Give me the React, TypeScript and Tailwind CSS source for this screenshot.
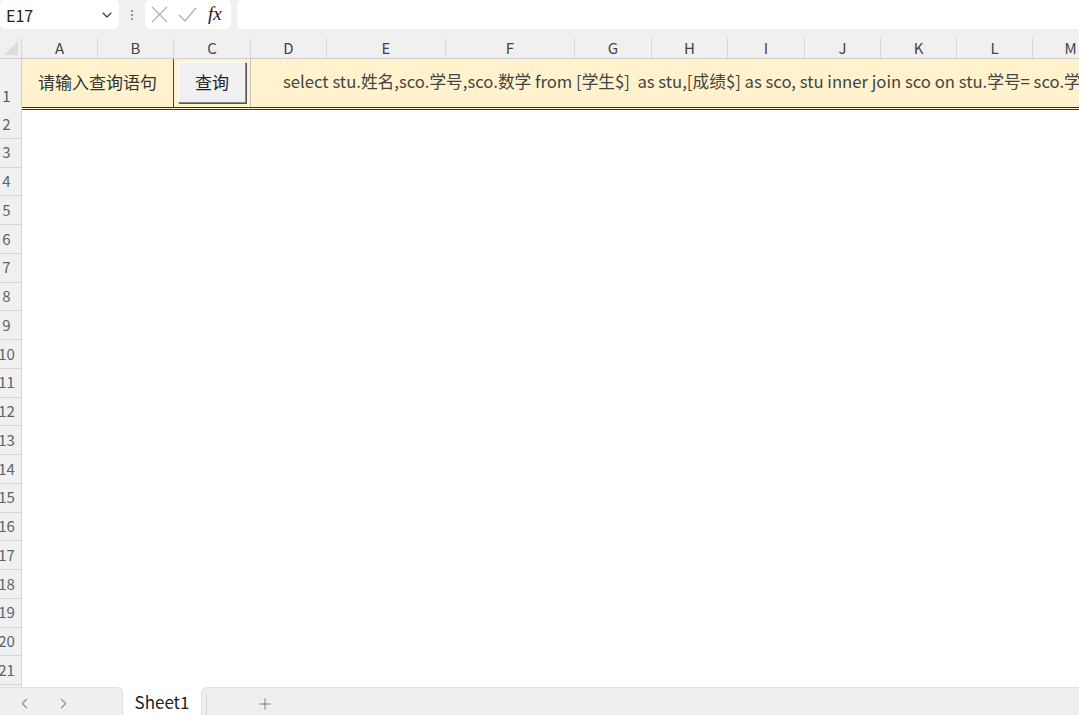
import React from 'react';
import { ChevronDown, ChevronLeft, ChevronRight, Plus } from 'lucide-react';

const COLUMNS: { label: string; width: number }[] = [
  { label: 'A', width: 76 },
  { label: 'B', width: 76 },
  { label: 'C', width: 77 },
  { label: 'D', width: 76 },
  { label: 'E', width: 119 },
  { label: 'F', width: 129 },
  { label: 'G', width: 77 },
  { label: 'H', width: 76 },
  { label: 'I', width: 77 },
  { label: 'J', width: 76 },
  { label: 'K', width: 76 },
  { label: 'L', width: 76 },
  { label: 'M', width: 76 },
];

const ROWS = Array.from({ length: 21 }, (_, i) => i + 2);

const FONT = { fontFamily: '"Noto Sans CJK SC", "Noto Sans", sans-serif' };

const QUERY =
  'select stu.姓名,sco.学号,sco.数学 from [学生$]  as stu,[成绩$] as sco, stu inner join sco on stu.学号= sco.学号';

const App: React.FC = () => {
  return (
    <div className="w-full h-[715px] flex flex-col overflow-hidden bg-white text-[#333]" style={FONT}>
      {/* Formula toolbar */}
      <div className="h-[38px] shrink-0 bg-[#f0f0f0] flex items-start gap-[6px]">
        <div className="w-[119px] h-[29px] bg-white rounded-[5px] flex items-center justify-between pl-[6px] pr-[4px]">
          <span className="text-[16px] text-[#222]">E17</span>
          <ChevronDown size={16} className="text-[#333]" strokeWidth={1.6} />
        </div>
        <div className="w-[14px] h-[29px] flex flex-col items-center justify-center gap-[2px]">
          <span className="w-[2px] h-[2px] bg-[#777] rounded-full"></span>
          <span className="w-[2px] h-[2px] bg-[#777] rounded-full"></span>
          <span className="w-[2px] h-[2px] bg-[#777] rounded-full"></span>
        </div>
        <div className="w-[86px] h-[29px] bg-white rounded-[5px] flex items-center pl-[6px] gap-[10px]">
          <svg width="17" height="17" viewBox="0 0 17 17" className="text-[#b0b0b0]">
            <path d="M1 1 L16 16 M16 1 L1 16" stroke="currentColor" strokeWidth="1.2" fill="none" />
          </svg>
          <svg width="19" height="17" viewBox="0 0 19 17" className="text-[#b0b0b0]">
            <path d="M1 9 L7 15 L18 2" stroke="currentColor" strokeWidth="1.2" fill="none" />
          </svg>
          <span className="italic text-[19px] text-[#222] ml-[1px]" style={{ fontFamily: '"Liberation Serif", serif' }}>
            fx
          </span>
        </div>
        <div className="flex-1 h-[29px] bg-white rounded-l-[5px]"></div>
      </div>

      {/* Column headers */}
      <div className="h-[21px] shrink-0 flex bg-[#f0f0f0] border-b border-[#cfcfcf]">
        <div className="w-[22px] shrink-0 relative border-r border-[#d6d6d6]">
          <div className="absolute right-[3px] bottom-[3px] w-0 h-0 border-l-[14px] border-l-transparent border-b-[14px] border-b-[#dcdcdc]"></div>
        </div>
        {COLUMNS.map(col => (
          <div
            key={col.label}
            className="shrink-0 flex items-center justify-center border-r border-[#d9d9d9] text-[15px] text-[#444]"
            style={{ width: col.width }}
          >
            {col.label}
          </div>
        ))}
      </div>

      {/* Row 1 */}
      <div className="h-[51px] shrink-0 flex">
        <div className="w-[22px] shrink-0 bg-[#f0f0f0] border-r border-[#cfcfcf] flex items-end pb-[3px]">
          <span className="w-[13px] text-center text-[15px] text-[#555]">1</span>
        </div>
        <div className="flex-1 flex bg-[#fff2cc] border-b-[3px] border-double border-[#333] overflow-hidden">
          <div className="w-[152px] shrink-0 flex items-center justify-center pb-[3px] border-r border-[#444] text-[17px] text-[#333]">
            请输入查询语句
          </div>
          <div className="w-[77px] shrink-0 flex items-center justify-center pb-[2px] border-r border-[#bfbfbf]">
            <button className="w-[68px] h-[41px] bg-[#f0f0f0] border border-t-white border-l-white border-r-[#8a8a8a] border-b-[#8a8a8a] shadow-[1px_1px_0_#555] text-[17px] text-[#222]">
              查询
            </button>
          </div>
          <div className="flex-1 flex items-center pl-[32px] pb-[3px] text-[16.7px] text-[#444] whitespace-pre">
            {QUERY}
          </div>
        </div>
      </div>

      {/* Empty rows */}
      <div className="flex-1 flex flex-col overflow-hidden">
        {ROWS.map(r => (
          <div key={r} className="h-[28.75px] shrink-0 flex">
            <div className="w-[22px] shrink-0 bg-[#f0f0f0] border-r border-b border-[#d6d6d6] flex items-center overflow-visible">
              <span className="w-[13px] flex justify-center text-[15px] text-[#5a6470] whitespace-nowrap">{r}</span>
            </div>
            <div className="flex-1 bg-white"></div>
          </div>
        ))}
      </div>

      {/* Sheet tabs */}
      <div className="h-[28px] shrink-0 flex bg-white">
        <div className="w-[123px] shrink-0 bg-[#efefef] rounded-tr-[6px] border-t border-r border-[#e0e0e0] flex items-center pl-[16px] gap-[22px] pt-[4px]">
          <ChevronLeft size={17} className="text-[#8f8f8f]" strokeWidth={1.5} />
          <ChevronRight size={17} className="text-[#8f8f8f]" strokeWidth={1.5} />
        </div>
        <div className="w-[78px] shrink-0 flex items-center justify-center text-[17px] text-[#222] pt-[1px]">
          Sheet1
        </div>
        <div className="flex-1 bg-[#efefef] rounded-tl-[6px] border-t border-l border-[#e0e0e0] flex items-end">
          <div className="ml-[4px] w-[1px] h-[20px] bg-[#d4d4d4]"></div>
          <Plus size={18} className="ml-[49px] mb-[2px] text-[#7a7a7a]" strokeWidth={1.3} />
        </div>
      </div>
    </div>
  );
};

export default App;
